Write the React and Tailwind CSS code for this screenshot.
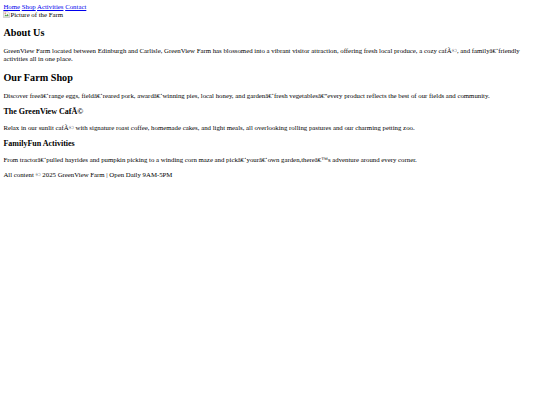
export default function App() {
  return (
    <div className="min-h-[405px] bg-white px-[3.4px] py-[3px] font-['Liberation_Serif',serif] text-[6.8px] leading-[7.9px] text-black">
      <nav>
        <a href="#" className="text-[#0000ee] underline">Home</a>{" "}
        <a href="#" className="text-[#0000ee] underline">Shop</a>{" "}
        <a href="#" className="text-[#0000ee] underline">Activities</a>{" "}
        <a href="#" className="text-[#0000ee] underline">Contact</a>
      </nav>
      <div className="flex items-end">
        <svg width="7" height="7" viewBox="0 0 16 16" className="mb-[1px]">
          <path d="M1 1h10l4 4v10H1z" fill="#f3f3f3" stroke="#9a9a9a" />
          <path d="M3 12l3-4 2 2 3-4 2 6z" fill="#5a9a4a" />
          <circle cx="5" cy="5" r="1.5" fill="#d9534f" />
        </svg>
        <span>Picture of the Farm</span>
      </div>

      <h2 className="my-[8.4px] text-[10.2px] leading-[11.7px] font-bold">About Us</h2>
      <p className="my-[6.7px]">
        GreenView Farm located between Edinburgh and Carlisle, GreenView Farm has blossomed into a vibrant visitor attraction, offering fresh local produce, a cozy cafÃ©, and familyâ€‘friendly activities all in one place.
      </p>

      <h2 className="my-[8.4px] text-[10.2px] leading-[11.7px] font-bold">Our Farm Shop</h2>
      <p className="my-[6.7px]">
        Discover freeâ€‘range eggs, fieldâ€‘reared pork, awardâ€‘winning pies, local honey, and gardenâ€‘fresh vegetablesâ€”every product reflects the best of our fields and community.
      </p>

      <h3 className="my-[7.6px] text-[8px] leading-[9.2px] font-bold">The GreenView CafÃ©</h3>
      <p className="my-[6.7px]">
        Relax in our sunlit cafÃ© with signature roast coffee, homemade cakes, and light meals, all overlooking rolling pastures and our charming petting zoo.
      </p>

      <h3 className="my-[7.6px] text-[8px] leading-[9.2px] font-bold">FamilyFun Activities</h3>
      <p className="my-[6.7px]">
        From tractorâ€‘pulled hayrides and pumpkin picking to a winding corn maze and pickâ€‘yourâ€‘own garden,thereâ€™s adventure around every corner.
      </p>

      <footer>
        <p className="my-[6.7px]">All content © 2025 GreenView Farm | Open Daily 9AM-5PM</p>
      </footer>
    </div>
  );
}
